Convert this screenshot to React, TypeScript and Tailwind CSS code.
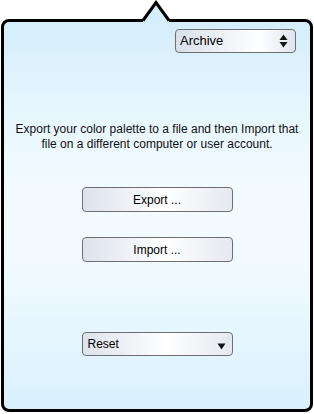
import { useState } from 'react'

const font = "font-['Liberation_Sans','Helvetica',Arial,sans-serif]"

function UpDown() {
  return (
    <svg width="9" height="14" viewBox="0 0 9 14" className="shrink-0">
      <polygon points="4.5,0.5 8.5,6 0.5,6" fill="#111" />
      <polygon points="0.5,8 8.5,8 4.5,13.5" fill="#111" />
    </svg>
  )
}

function Down() {
  return (
    <svg width="9" height="7" viewBox="0 0 9 7" className="shrink-0">
      <polygon points="0.5,0.5 8.5,0.5 4.5,6.5" fill="#111" />
    </svg>
  )
}

export default function App() {
  const [mode] = useState('Archive')

  return (
    <div className={`relative w-[314px] h-[414px] bg-white pt-[19px] ${font}`}>
      <div className="ml-[1px] w-[312px] h-[393px] rounded-[8px] border-[3px] border-black bg-[linear-gradient(to_bottom,#d4eefb_0%,#e8f7fe_25%,#f4fbff_50%,#eef9ff_68%,#d8f1fd_100%)] flex flex-col">
        {/* popup menu */}
        <div className="flex justify-end pt-[7px] pr-[14px]">
          <button className="w-[121px] h-[24px] rounded-[4px] border border-[#6f6f6f] bg-[linear-gradient(to_right,#d9dfea_0%,#eef2f7_40%,#ffffff_70%,#dfe5ee_100%)] flex items-center justify-between pl-[4px] pr-[7px] text-[13px] text-black">
            <span>{mode}</span>
            <UpDown />
          </button>
        </div>

        <p className="mt-[69px] text-center text-[12px] leading-[15px] text-[#111]">
          Export your color palette to a file and then Import that
          <br />
          file on a different computer or user account.
        </p>

        <div className="mt-[35px] flex flex-col items-center gap-[25px]">
          <button className="w-[151px] h-[25px] rounded-[4px] border border-[#6f6f6f] bg-[linear-gradient(to_right,#dde3ec_0%,#f1f4f8_35%,#ffffff_55%,#e4e9f1_100%)] text-[12px] text-black">
            Export ...
          </button>
          <button className="w-[151px] h-[25px] rounded-[4px] border border-[#6f6f6f] bg-[linear-gradient(to_right,#dde3ec_0%,#f1f4f8_35%,#ffffff_55%,#e4e9f1_100%)] text-[12px] text-black">
            Import ...
          </button>
        </div>

        <div className="mt-[70px] flex justify-center">
          <button className="w-[151px] h-[24px] rounded-[4px] border border-[#6f6f6f] bg-[linear-gradient(to_right,#dde3ec_0%,#f1f4f8_35%,#ffffff_55%,#e4e9f1_100%)] flex items-center justify-between pl-[5px] pr-[6px] text-[12px] text-black">
            <span>Reset</span>
            <span className="mt-[4px]"><Down /></span>
          </button>
        </div>
      </div>

      {/* pointer arrow */}
      <svg className="absolute left-[140px] top-0" width="32" height="24" viewBox="0 0 32 24">
        <polygon points="3,21 16,2.5 29,21 29,23 3,23" fill="#d5eefb" />
        <polyline points="3,20.5 16,2.5 29,20.5" fill="none" stroke="#000" strokeWidth="3" strokeLinejoin="miter" />
      </svg>
    </div>
  )
}
